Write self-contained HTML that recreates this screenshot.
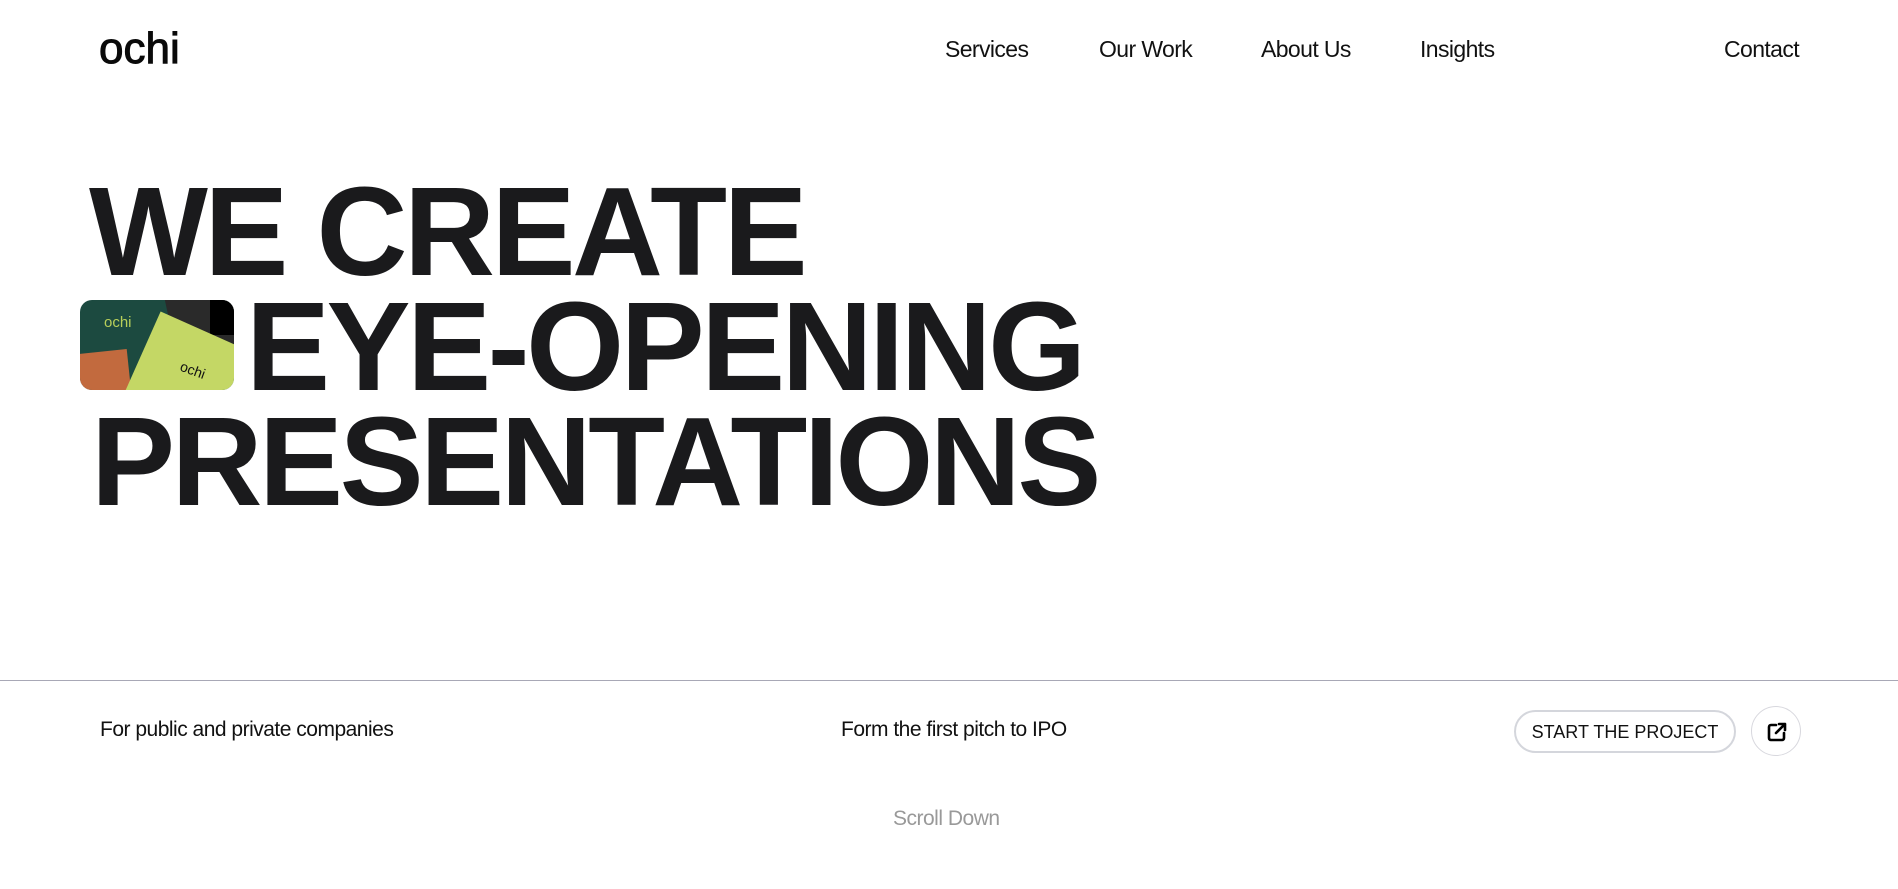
<!DOCTYPE html>
<html><head><meta charset="utf-8"><style>
*{margin:0;padding:0;box-sizing:border-box}
body{width:1898px;height:889px;background:#fff;font-family:"Liberation Sans",sans-serif;color:#111;position:relative;overflow:hidden}
.abs{position:absolute;white-space:nowrap}
.logo{left:99px;top:24px;font-size:44px;font-weight:normal;letter-spacing:0px;color:#0a0a0a;-webkit-text-stroke:1px #0a0a0a}
.nav{top:36px;font-size:23px;letter-spacing:-0.6px;color:#111}
.h{font-weight:bold;font-size:126px;letter-spacing:-3.5px;color:#1a1a1c;line-height:1}
.img{left:80px;top:300px;width:154px;height:90px;border-radius:12px;overflow:hidden;background:#1c4a40}
.line{left:0;top:680px;width:1898px;height:1px;background:#a8a8b6}
.sm{top:718px;font-size:21px;letter-spacing:-0.5px;color:#111}
.btn{left:1514px;top:710px;width:222px;height:43px;border:2px solid #d4d6dc;border-radius:22px;font-size:18px;text-align:center;line-height:40px;color:#111}
.circ{left:1751px;top:706px;width:50px;height:50px;border:1px solid #d8d8de;border-radius:50%}
</style></head><body>
<div class="abs logo">ochi</div>
<div class="abs nav" style="left:945px">Services</div>
<div class="abs nav" style="left:1099px">Our Work</div>
<div class="abs nav" style="left:1261px">About Us</div>
<div class="abs nav" style="left:1420px">Insights</div>
<div class="abs nav" style="left:1724px">Contact</div>

<div class="abs h" style="left:89px;top:169px">WE CREATE</div>
<div class="abs img">
 <div style="position:absolute;left:-10px;top:52px;width:60px;height:60px;background:#c26a3e;transform:rotate(-6deg)"></div>
 <div style="position:absolute;left:90px;top:-10px;width:80px;height:60px;background:#2a2a2a;transform:rotate(-12deg)"></div>
 <div style="position:absolute;left:130px;top:-5px;width:30px;height:40px;background:#000"></div>
 <div style="position:absolute;left:58px;top:28px;width:100px;height:90px;background:#c4d765;transform:rotate(24deg)"></div>
 <div style="position:absolute;left:24px;top:14px;font-size:15px;color:#b8cf5a">ochi</div>
 <div style="position:absolute;left:100px;top:62px;font-size:14px;color:#111;transform:rotate(20deg)">ochi</div>
</div>
<div class="abs h" style="left:246px;top:284px">EYE-OPENING</div>
<div class="abs h" style="left:91px;top:399px">PRESENTATIONS</div>

<div class="abs line"></div>
<div class="abs sm" style="left:100px">For public and private companies</div>
<div class="abs sm" style="left:841px">Form the first pitch to IPO</div>
<div class="abs btn">START THE PROJECT</div>
<div class="abs circ"><svg width="50" height="50" viewBox="0 0 50 50"><path d="M24 18h-5a2 2 0 0 0-2 2v11a2 2 0 0 0 2 2h11a2 2 0 0 0 2-2v-5M24 26l9-9M27 17h6v6" fill="none" stroke="#000" stroke-width="2.6" stroke-linecap="round" stroke-linejoin="round"/></svg></div>
<div class="abs" style="left:893px;top:807px;font-size:21px;color:#999;letter-spacing:-0.5px">Scroll Down</div>
</body></html>
